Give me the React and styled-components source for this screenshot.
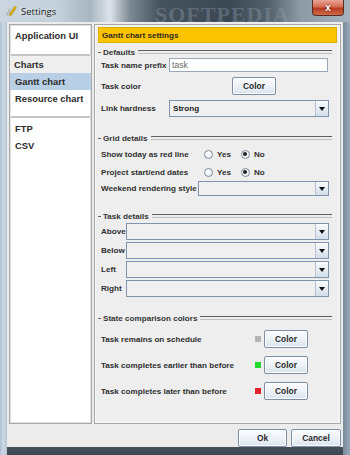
import React from "react";
import styled, { createGlobalStyle } from "styled-components";

const FS = "8.1px";

const Global = createGlobalStyle`
  html, body {
    margin: 0;
    padding: 0;
    background: #5b6670;
  }
  * { box-sizing: border-box; }
`;

const Window = styled.div`
  width: 350px;
  height: 455px;
  display: flex;
  flex-direction: column;
  padding: 0 7px 8px 7px;
  background:
    linear-gradient(90deg, #a9c0d8 0px, #cfd9e3 3px, #b8c6d4 7px, transparent 7px, transparent 343px, #7b8a99 343px, #9aabbd 350px),
    linear-gradient(180deg, #c9d3dc 0px, #9ba9b6 200px, #6f7c88 400px, #3e4852 455px);
  font-family: "Liberation Sans", Arial, sans-serif;
  overflow: hidden;
`;

const TitleBar = styled.div`
  height: 22px;
  flex: none;
  display: flex;
  align-items: center;
  position: relative;
  margin: 0 -7px;
  padding: 0 5px;
  background: linear-gradient(90deg, #cbd6e0 0px, #c3cfda 60px, #a8b6c2 90px, #dce3ea 110px, #7c8893 130px, #46525e 160px, #3b4753 230px, #56626d 270px, #8d9aa6 300px, #a6b3bf 350px);
`;

const Watermark = styled.div`
  position: absolute;
  left: 155px;
  top: 2px;
  font-family: "Liberation Serif", serif;
  font-size: 22px;
  font-weight: bold;
  letter-spacing: 1px;
  color: rgba(150, 165, 180, 0.35);
  pointer-events: none;
`;

const TitleText = styled.span`
  margin-left: 4px;
  font-family: "Open Sans", "Liberation Sans", sans-serif;
  font-size: 9.5px;
  color: #1c1c1c;
  text-shadow: 0 0 4px rgba(255, 255, 255, 0.9);
`;

const CloseButton = styled.div`
  position: absolute;
  right: 6px;
  top: 0;
  width: 32px;
  height: 16px;
  border: 1px solid #5a2a24;
  border-top: none;
  border-radius: 0 0 4px 4px;
  background: linear-gradient(180deg, #e9a593 0%, #d56b52 45%, #b73a1f 55%, #d06a4a 100%);
  display: flex;
  align-items: center;
  justify-content: center;
  color: #fff;
  font-size: 10px;
  font-weight: bold;
  text-shadow: 0 0 2px #3a0c04;
`;

const Client = styled.div`
  flex: 1;
  background: #ececec;
  display: flex;
  flex-direction: column;
  padding: 2px 2px 0 2px;
  color: #303030;
`;

const Body = styled.div`
  height: 400px;
  display: flex;
  gap: 2px;
`;

const Nav = styled.div`
  width: 83px;
  background: #fff;
  border: 1px solid #a8a8a8;
  box-shadow: inset 0 0 0 1px #e2e2e2;
  display: flex;
  flex-direction: column;
`;

const NavGroup = styled.div`
  height: ${(p) => p.h}px;
  flex: ${(p) => (p.fill ? 1 : "none")};
  padding-top: ${(p) => p.pt || 0}px;
  display: flex;
  flex-direction: column;
`;

const NavSep = styled.div`
  height: 2px;
  flex: none;
  background: #c4c4c4;
  margin: 0 1px;
`;

const NavItem = styled.div`
  height: 17px;
  display: flex;
  align-items: center;
  padding-left: ${(p) => (p.header ? 4 : 5)}px;
  font-size: 9.4px;
  font-weight: bold;
  color: #2b2b2b;
  white-space: nowrap;
  background: ${(p) => (p.selected ? "#b8cfe5" : p.header ? "#efefef" : "transparent")};
`;

const Panel = styled.div`
  flex: 1;
  border: 1px solid #a8a8a8;
  box-shadow: inset 0 0 0 1px #f8f8f8;
  padding: 2px 3px;
  background: #eeeeee;
  display: flex;
  flex-direction: column;
`;

const Header = styled.div`
  height: 16px;
  flex: none;
  background: #fcc400;
  border: 1px solid #e2ae00;
  display: flex;
  align-items: center;
  padding-left: 3px;
  font-size: ${FS};
  font-weight: bold;
  color: #2e2a1e;
`;

const SectionTitle = styled.div`
  height: 10px;
  margin-top: ${(p) => p.mt}px;
  margin-right: 5px;
  display: flex;
  align-items: center;
  gap: 2px;
  font-size: ${FS};
  font-weight: bold;
  color: #353535;

  &::before {
    content: "";
    width: 3px;
    height: 1px;
    background: #666;
  }

  &::after {
    content: "";
    flex: 1;
    height: 2px;
    border-top: 1px solid #5e5e5e;
    border-bottom: 1px solid #bdbdbd;
    margin-left: 1px;
  }
`;

const Row = styled.div`
  height: ${(p) => p.h}px;
  margin-top: ${(p) => p.mt || 0}px;
  padding-left: 3px;
  padding-right: ${(p) => p.pr || 8}px;
  display: flex;
  align-items: center;
  font-size: ${FS};
  font-weight: bold;
  color: #2f2f2f;
`;

const Label = styled.div`
  width: ${(p) => p.w}px;
  flex: none;
  white-space: nowrap;
`;

const TextField = styled.div`
  flex: 1;
  height: 14px;
  background: #fff;
  border: 1px solid #9aa7b6;
  display: flex;
  align-items: center;
  padding-left: 2px;
  font-size: 8.6px;
  font-weight: normal;
  color: #6a6a6a;
`;

const Combo = styled.div`
  flex: 1;
  height: ${(p) => p.h || 17}px;
  border: 1px solid #7f93ad;
  background: #f0f0f0;
  display: flex;
  align-items: stretch;
  font-size: ${FS};
  font-weight: bold;
  color: #222;
`;

const ComboValue = styled.div`
  flex: 1;
  display: flex;
  align-items: center;
  padding-left: 3px;
`;

const ComboArrow = styled.div`
  width: 13px;
  border-left: 1px solid #b6c2d0;
  background: linear-gradient(180deg, #fbfcfd 0%, #e6edf4 50%, #d3dee9 100%);
  display: flex;
  align-items: center;
  justify-content: center;

  &::after {
    content: "";
    border-left: 3.5px solid transparent;
    border-right: 3.5px solid transparent;
    border-top: 4px solid #111;
  }
`;

const Button = styled.div`
  width: ${(p) => p.w}px;
  height: ${(p) => p.h || 18}px;
  flex: none;
  border: 1px solid #7c8ea5;
  border-radius: 2px;
  box-shadow: inset 0 0 0 1px #fdfdfd;
  background: linear-gradient(180deg, #fbfcfe 0%, #eef3f8 45%, #dae4ee 100%);
  display: flex;
  align-items: center;
  justify-content: center;
  font-size: 8.4px;
  font-weight: bold;
  color: #2b2b2b;
`;

const RadioGroup = styled.div`
  display: flex;
  align-items: center;
`;

const RadioOption = styled.div`
  display: flex;
  align-items: center;
  gap: 4px;
  margin-right: 10px;
`;

const RadioDot = styled.span`
  width: 9px;
  height: 9px;
  border-radius: 50%;
  border: 1px solid #7d8a98;
  background: radial-gradient(circle at 40% 35%, #fff 0%, #e4e9ef 100%);
  display: flex;
  align-items: center;
  justify-content: center;

  &::after {
    content: "";
    width: 4px;
    height: 4px;
    border-radius: 50%;
    background: ${(p) => (p.checked ? "#1e1e1e" : "transparent")};
  }
`;

const Swatch = styled.span`
  width: 6px;
  height: 6px;
  margin-right: 3px;
  flex: none;
  background: ${(p) => p.color};
`;

const Spacer = styled.div`
  flex: 1;
`;

const Footer = styled.div`
  flex: 1;
  display: flex;
  justify-content: flex-end;
  align-items: flex-start;
  gap: 4px;
  padding-top: 5px;
`;

function AppIcon() {
  return (
    <svg width="12" height="12" viewBox="0 0 12 12">
      <path d="M1 11 L4 4 L6 6 Z" fill="#8a8a8a" />
      <path d="M4 10 L10 1 L11.5 2.5 L5.5 11 Z" fill="#e8b400" stroke="#a07a00" strokeWidth="0.5" />
      <path d="M2 8 L7 1 L8 2 L3 9 Z" fill="#c9c9c9" />
    </svg>
  );
}

function Radio({ checked, children }) {
  return (
    <RadioOption>
      <RadioDot checked={checked} />
      {children}
    </RadioOption>
  );
}

function Select({ value, h }) {
  return (
    <Combo h={h}>
      <ComboValue>{value}</ComboValue>
      <ComboArrow />
    </Combo>
  );
}

const stateRows = [
  { label: "Task remains on schedule", color: "#b4b4b4", mt: 7 },
  { label: "Task completes earlier than before", color: "#22d82a", mt: 8 },
  { label: "Task completes later than before", color: "#e2232b", mt: 8 },
];

export default function App() {
  return (
    <>
      <Global />
      <Window>
        <TitleBar>
          <Watermark>SOFTPEDIA</Watermark>
          <AppIcon />
          <TitleText>Settings</TitleText>
          <CloseButton>x</CloseButton>
        </TitleBar>
        <Client>
          <Body>
            <Nav>
              <NavGroup h={29} pt={2}>
                <NavItem>Application UI</NavItem>
              </NavGroup>
              <NavSep />
              <NavGroup h={60}>
                <NavItem header>Charts</NavItem>
                <NavItem selected>Gantt chart</NavItem>
                <NavItem>Resource chart</NavItem>
              </NavGroup>
              <NavSep />
              <NavGroup fill pt={2}>
                <NavItem>FTP</NavItem>
                <NavItem>CSV</NavItem>
              </NavGroup>
            </Nav>
            <Panel>
              <Header>Gantt chart settings</Header>
              <SectionTitle mt={4}>Defaults</SectionTitle>
              <Row h={14} mt={1} pr={9}>
                <Label w={68}>Task name prefix</Label>
                <TextField>task</TextField>
              </Row>
              <Row h={18} mt={5}>
                <Label w={131}>Task color</Label>
                <Button w={44}>Color</Button>
              </Row>
              <Row h={17} mt={5}>
                <Label w={68}>Link hardness</Label>
                <Select value="Strong" />
              </Row>

              <SectionTitle mt={16}>Grid details</SectionTitle>
              <Row h={14} mt={4}>
                <Label w={103}>Show today as red line</Label>
                <RadioGroup>
                  <Radio>Yes</Radio>
                  <Radio checked>No</Radio>
                </RadioGroup>
              </Row>
              <Row h={14} mt={4}>
                <Label w={103}>Project start/end dates</Label>
                <RadioGroup>
                  <Radio>Yes</Radio>
                  <Radio checked>No</Radio>
                </RadioGroup>
              </Row>
              <Row h={15} mt={2}>
                <Label w={97}>Weekend rendering style</Label>
                <Select h={15} />
              </Row>

              <SectionTitle mt={15}>Task details</SectionTitle>
              {["Above", "Below", "Left", "Right"].map((l) => (
                <Row key={l} h={17} mt={2}>
                  <Label w={25}>{l}</Label>
                  <Select />
                </Row>
              ))}

              <SectionTitle mt={16}>State comparison colors</SectionTitle>
              {stateRows.map((r) => (
                <Row key={r.label} h={18} mt={r.mt} pr={29}>
                  <Label w={0}>{r.label}</Label>
                  <Spacer />
                  <Swatch color={r.color} />
                  <Button w={44}>Color</Button>
                </Row>
              ))}
            </Panel>
          </Body>
          <Footer>
            <Button w={49} h={18}>Ok</Button>
            <Button w={50} h={18}>Cancel</Button>
          </Footer>
        </Client>
      </Window>
    </>
  );
}
